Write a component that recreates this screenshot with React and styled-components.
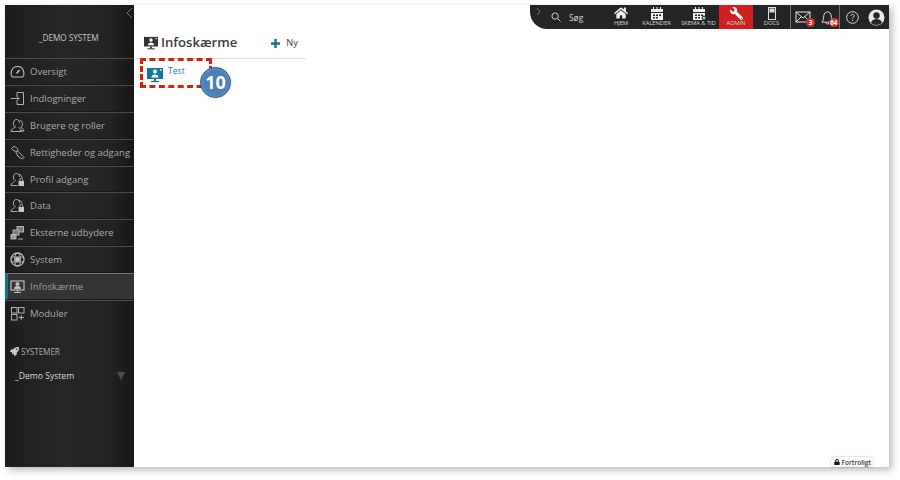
import React from "react";
import styled, { createGlobalStyle } from "styled-components";
import { FaHome, FaLock, FaRocket, FaWrench } from "react-icons/fa";

const Global = createGlobalStyle`
  html, body { margin: 0; padding: 0; background: #fff; }
  body { width: 900px; height: 480px; overflow: hidden; font-family: "Open Sans", "Liberation Sans", sans-serif; }
  * { box-sizing: border-box; }
`;

const Page = styled.div`
  width: 900px;
  height: 480px;
  padding: 5px 11px 13px 5px;
`;
const Frame = styled.div`
  position: relative;
  display: flex;
  width: 884px;
  height: 462px;
  background: #fff;
  box-shadow: 3px 3px 7px rgba(0, 0, 0, 0.28);
`;
const Sidebar = styled.aside`
  width: 129px;
  flex: none;
  position: relative;
  display: flex;
  flex-direction: column;
  color: #aaa;
  background: linear-gradient(90deg, #1c1d1e 0%, #262626 45%, #232323 80%, #171717 100%);
`;
const Collapse = styled.svg`
  position: absolute;
  top: 2px;
  right: 1px;
  width: 7px;
  height: 12px;
`;
const Brand = styled.div`
  height: 53px;
  padding: 27px 0 0 34px;
  font-size: 8.3px;
  line-height: 12px;
  color: #c4c4c4;
  letter-spacing: -0.1px;
`;
const Menu = styled.nav`
  display: flex;
  flex-direction: column;
`;
const MenuRow = styled.div`
  height: 26.9px;
  display: flex;
  align-items: center;
  gap: 5px;
  border-top: 1px solid ${(p) => (p.$active ? "#77797a" : "#4b4b4b")};
  border-bottom: 1px solid #181818;
  border-left: ${(p) => (p.$active ? "3px solid #14708f" : "0 solid transparent")};
  padding-left: ${(p) => (p.$active ? "2px" : "5px")};
  background: ${(p) => (p.$active ? "#333435" : "transparent")};
  font-size: 9.5px;
  white-space: nowrap;
  color: ${(p) => (p.$active ? "#9c9c9c" : "#aaa")};
  &:last-child { border-bottom: 0; }
`;
const MenuIcon = styled.svg`
  width: 15px;
  height: 15px;
  flex: none;
  fill: none;
  stroke: #bdbdbd;
  stroke-width: 0.9;
`;
const SectionTitle = styled.div`
  margin-top: 19px;
  padding-left: 5px;
  display: flex;
  align-items: center;
  gap: 2px;
  font-size: 8.2px;
  line-height: 12px;
  letter-spacing: -0.1px;
  color: #aaa;
`;
const SystemRow = styled.div`
  margin-top: 12px;
  padding: 0 9px 0 10px;
  display: flex;
  justify-content: space-between;
  align-items: center;
  font-size: 8.6px;
  line-height: 12px;
  color: #d8d8d8;
`;
const Caret = styled.span`
  width: 0;
  height: 0;
  border-left: 4px solid transparent;
  border-right: 4px solid transparent;
  border-top: 8px solid #4c4c4c;
`;
const Main = styled.main`
  flex: 1;
  min-width: 0;
  display: flex;
  flex-direction: column;
`;
const TopBar = styled.header`
  align-self: flex-end;
  width: 359px;
  height: 24px;
  display: flex;
  align-items: stretch;
  background: #232426;
  border-radius: 0 0 0 17px;
  color: #d8d8d8;
`;
const Expand = styled.svg`
  width: 5px;
  height: 9px;
  margin: 2px 0 0 6px;
  flex: none;
`;
const Search = styled.div`
  display: flex;
  align-items: center;
  gap: 8px;
  width: 56px;
  flex: none;
  margin-left: 10px;
  font-size: 8.4px;
  svg { width: 10px; height: 10px; fill: none; stroke: #d0d0d0; stroke-width: 1.1; }
`;
const Nav = styled.div`
  display: flex;
  align-items: stretch;
  flex: none;
`;
const NavItem = styled.div`
  width: ${(p) => p.$w}px;
  display: flex;
  flex-direction: column;
  align-items: center;
  justify-content: flex-end;
  padding-bottom: 2px;
  font-size: 5.9px;
  line-height: 7px;
  white-space: nowrap;
  letter-spacing: -0.1px;
  color: #d4d4d4;
  background: ${(p) => (p.$active ? "#cf1f20" : "transparent")};
`;
const NavGlyph = styled.svg`
  width: 14px;
  height: 13px;
  fill: #f1f1f1;
`;
const AdminGlyph = styled(FaWrench)`
  width: 13px;
  height: 13px;
  color: #f4f4f4;
  transform: scaleX(-1);
`;
const Divider = styled.div`
  width: 1px;
  background: #707172;
  flex: none;
`;
const Tool = styled.div`
  width: ${(p) => p.$w}px;
  position: relative;
  flex: none;
  display: flex;
  align-items: center;
  justify-content: center;
`;
const ToolIcon = styled.svg`
  width: ${(p) => p.$s || 16}px;
  height: ${(p) => p.$s || 16}px;
  fill: none;
  stroke: #e4e4e4;
  stroke-width: 1;
`;
const Count = styled.span`
  position: absolute;
  right: ${(p) => p.$r}px;
  bottom: 2px;
  min-width: 9px;
  height: 9px;
  padding: 0 1.5px;
  border-radius: 4.5px;
  background: #d92b2b;
  color: #fff;
  font-size: 6.4px;
  font-weight: 700;
  line-height: 9px;
  text-align: center;
`;
const ListPanel = styled.section`
  width: 171px;
  margin-left: 1px;
`;
const PanelHead = styled.div`
  height: 30px;
  padding: 6px 8px 0 9px;
  display: flex;
  align-items: flex-start;
  justify-content: space-between;
  border-bottom: 1px solid #dcdcdc;
`;
const Title = styled.h1`
  margin: 0;
  display: flex;
  align-items: center;
  gap: 3px;
  font-size: 13.1px;
  line-height: 15px;
  font-weight: 600;
  color: #3a3a3a;
`;
const NewButton = styled.div`
  display: flex;
  align-items: center;
  gap: 5px;
  padding-top: 2px;
  font-size: 9.3px;
  line-height: 12px;
  color: #3c3c3c;
`;
const ListItem = styled.div`
  display: flex;
  align-items: flex-start;
  gap: 5px;
  padding: 6px 0 0 12px;
  font-size: 8.6px;
  line-height: 12px;
  color: #1a7d9f;
  svg { margin-top: 2px; }
`;
const Callout = styled.div`
  position: absolute;
  left: 135px;
  top: 53px;
  width: 72px;
  height: 30px;
  border: 3px dashed #d8200e;
`;
const Badge = styled.div`
  position: absolute;
  left: 195px;
  top: 62px;
  width: 31px;
  height: 31px;
  border-radius: 50%;
  background: #4a80b7;
  border: 1.5px solid #2f6295;
  box-shadow: inset 0 0 3px rgba(255,255,255,.35), 0 0 2px rgba(0,0,0,.2);
  color: #fff;
  font-size: 18px;
  line-height: 28px;
  font-weight: 700;
  text-align: center;
`;
const Confidential = styled.div`
  position: absolute;
  right: 16px;
  bottom: 0;
  height: 10px;
  padding: 0 2px 0 3px;
  display: flex;
  align-items: center;
  gap: 2px;
  border-radius: 4px 4px 0 0;
  background: #fff;
  box-shadow: 0 0 2px rgba(0, 0, 0, 0.35);
  color: #333;
  font-size: 6.5px;
  font-weight: 600;
  svg { width: 6px; height: 6px; }
`;

const TwoPeople = () => (<>
  <path d="M6 9C4.200 9 3.400 7 3.400 5.200S4.500 1.500 6.500 1.500c1.700 0 3 1.500 3 3.700" />
  <path d="M9.500 2.500c2 0 3 1.300 3 3.200s-.8 3-1.800 3.600c1 .6 2.800 1 3.300 3.700H9.500" />
  <path d="M1 13.500c.3-2.600 2.300-3.300 3.700-4M8.300 9.500c1.400.7 3 1.400 3.200 4M1 13.500h10.500" />
</>);
const PeopleLock = () => (<>
  <path d="M5.800 8.500C4.200 8.500 3.400 6.800 3.400 5S4.500 1.500 6.500 1.500 9.600 3 9.600 5" />
  <path d="M9 2.500c1.800.2 3 1.400 3 3.200" />
  <path d="M1 13.500c.3-2.500 2.200-3.100 3.600-3.800M1 13.500h6.500" />
  <rect x="8.500" y="9" width="5.500" height="5" fill="#c6c6c6" stroke="none" />
  <path d="M9.800 9V7.800a1.450 1.450 0 0 1 2.900 0V9" />
</>);

const icons = {
  gauge: <><path d="M2.500 13C.5 12 1 9 1.500 7 2.300 4 4.500 2.500 7.500 2.500S12.700 4 13.500 7c.5 2 1 5-1 6z" strokeWidth="1.100" /><path d="M6.500 9.500L9.500 6" strokeWidth="1.600" /></>,
  login: <><path d="M7 1.500h6.500v12H7M7 1.500v3.500M7 13.500V10" /><path d="M1 7.500h8M6.500 5l2.500 2.500L6.500 10" /></>,
  users: <TwoPeople />,
  key: <><path d="M1.500 3.500L4 1.500c1.500 0 3.500 1.500 4 3.500L7 6.500C5 6.500 2.500 5.500 1.500 3.500z" /><path d="M7.500 5.800l6.500 6.700-1.500 1.500-1.500-1-1 0-1-1.500-1 0L5.800 7" /></>,
  profile: <PeopleLock />,
  network: <><rect x="7" y="1.500" width="6.500" height="5.500" fill="#777" /><rect x="3" y="5" width="6" height="5" fill="#777" /><rect x="1" y="9.500" width="5" height="4.500" fill="#999" /><path d="M8 14h5" /></>,
  globe: <><circle cx="7.500" cy="7.500" r="6.500" strokeWidth="1.300" /><ellipse cx="7.500" cy="7.500" rx="3" ry="6.500" /><path d="M1.500 5h12M1.500 10h12" /><circle cx="7.500" cy="7.500" r="2.200" fill="#c6c6c6" /></>,
  screen: <><rect x="1" y="2" width="13" height="9" strokeWidth="1.200" /><circle cx="7.500" cy="5" r="1.600" fill="#c6c6c6" /><path d="M4.500 9.500c0-1.500 1.200-2.200 3-2.200s3 .7 3 2.200z" fill="#c6c6c6" /><path d="M7.500 11v2M4 13.500h7" strokeWidth="1.200" /></>,
  modules: <><rect x="1.500" y="1.500" width="5.500" height="5.500" /><rect x="8.500" y="1.500" width="5.500" height="5.500" /><rect x="1.500" y="8.500" width="5.500" height="5.500" /><path d="M11.250 9v5M8.500 11.500h5.500" /></>,
};

const rows = [
  ["gauge", "Oversigt"],
  ["login", "Indlogninger"],
  ["users", "Brugere og roller"],
  ["key", "Rettigheder og adgang"],
  ["profile", "Profil adgang"],
  ["profile", "Data"],
  ["network", "Eksterne udbydere"],
  ["globe", "System"],
  ["screen", "Infoskærme", true],
  ["modules", "Moduler"],
];

const Monitor = ({ color, size = 16 }) => (
  <svg width={size} height={size} viewBox="0 0 16 16">
    <rect x="0" y="1" width="16" height="11" fill={color} />
    <circle cx="8" cy="4.600" r="2" fill="#fff" />
    <path d="M4.500 10.500c0-2 1.500-3 3.500-3s3.500 1 3.500 3z" fill="#fff" />
    <rect x="13" y="2.200" width="1.500" height="1.500" fill="#fff" />
    <rect x="7" y="12" width="2" height="2" fill={color} />
    <rect x="4" y="14" width="8" height="1.200" fill={color} />
  </svg>
);

const Calendar = ({ dot }) => (
  <NavGlyph viewBox="0 0 14 13">
    <rect x="1" y="2" width="12" height="3" />
    <path d="M3 0h1v2H3zM6.500 0h1v2h-1zM10 0h1v2h-1z" />
    <path d="M1 6h12v7H1zM3 7.500v1.500h2V7.500zM6 7.500v1.500h2V7.500zM9 7.500v1.500h2V7.500zM3 10v1.500h2V10zM6 10v1.500h2V10z" fillRule="evenodd" />
    {dot && <circle cx="12" cy="11" r="2" fill="#bbb" stroke="#232426" />}
  </NavGlyph>
);

export default function App() {
  return (
    <Page>
      <Global />
      <Frame>
        <Sidebar>
          <Collapse viewBox="0 0 7 12"><path d="M6 1L1 6l5 5" fill="none" stroke="#6f6f6f" /></Collapse>
          <Brand>_DEMO SYSTEM</Brand>
          <Menu>
            {rows.map(([icon, label, active]) => (
              <MenuRow key={label} $active={active}>
                <MenuIcon viewBox="0 0 15 15">{icons[icon]}</MenuIcon>
                {label}
              </MenuRow>
            ))}
          </Menu>
          <SectionTitle><FaRocket size={9} color="#c8c8c8" />SYSTEMER</SectionTitle>
          <SystemRow>_Demo System<Caret /></SystemRow>
        </Sidebar>
        <Main>
          <TopBar>
            <Expand viewBox="0 0 5 9"><path d="M1 1l3 3.500-3 3.500" fill="none" stroke="#777" /></Expand>
            <Search>
              <svg viewBox="0 0 11 11"><circle cx="4.500" cy="4.500" r="3.500" /><path d="M7 7l3.500 3.500" /></svg>
              Søg
            </Search>
            <Nav>
              <NavItem $w={28}>
                <FaHome size={14} color="#f1f1f1" />
                HJEM
              </NavItem>
              <NavItem $w={43}><Calendar />KALENDER</NavItem>
              <NavItem $w={41}><Calendar dot />SKEMA &amp; TID</NavItem>
              <NavItem $w={34} $active>
                <AdminGlyph />
                ADMIN
              </NavItem>
              <NavItem $w={37}>
                <NavGlyph viewBox="0 0 14 13" style={{ fill: "none", stroke: "#ddd" }}>
                  <rect x="3.500" y="0.500" width="7" height="12" />
                  <rect x="5" y="2" width="4" height="3" fill="#ddd" />
                </NavGlyph>
                DOCS
              </NavItem>
            </Nav>
            <Divider />
            <Tool $w={24}>
              <ToolIcon viewBox="0 0 16 16" $s={16}><rect x="1" y="3" width="14" height="10" /><path d="M1 3l7 6 7-6M1 13l5.500-5.500M15 13L9.500 7.500" /></ToolIcon>
              <Count $r={0}>3</Count>
            </Tool>
            <Tool $w={24}>
              <ToolIcon viewBox="0 0 16 16" $s={15}><path d="M2 13c2-2 1.500-4 2-7 .4-2.500 2-4 4-4s3.600 1.500 4 4c.5 3 0 5 2 7zM6.500 13.500a1.500 1.500 0 0 0 3 0" /></ToolIcon>
              <Count $r={0}>64</Count>
            </Tool>
            <Divider />
            <Tool $w={24}>
              <ToolIcon viewBox="0 0 14 14" $s={13}>
                <circle cx="7" cy="7" r="6.300" />
                <path d="M5.200 5.400c0-1.100.8-1.800 1.900-1.800s1.800.7 1.800 1.600c0 1.400-1.900 1.500-1.900 3M7 9.500v1.300" />
              </ToolIcon>
            </Tool>
            <Tool $w={25}>
              <svg width="17" height="17" viewBox="0 0 17 17">
                <circle cx="8.500" cy="8.500" r="8" fill="#e8e8e8" />
                <circle cx="8.500" cy="6.500" r="3.200" fill="#232426" />
                <path d="M3 14c.5-3 3-4 5.500-4s5 1 5.500 4c-3 2.500-8 2.500-11 0z" fill="#232426" />
              </svg>
            </Tool>
          </TopBar>
          <ListPanel>
            <PanelHead>
              <Title><Monitor color="#333" size={14} />Infoskærme</Title>
              <NewButton>
                <svg width="11" height="11" viewBox="0 0 11 11"><path d="M5.500 1v9M1 5.500h9" stroke="#176f90" strokeWidth="2.400" /></svg>
                Ny
              </NewButton>
            </PanelHead>
            <ListItem><Monitor color="#12789c" size={16} />Test</ListItem>
          </ListPanel>
        </Main>
        <Callout />
        <Badge>10</Badge>
        <Confidential><FaLock color="#111" />Fortroligt</Confidential>
      </Frame>
    </Page>
  );
}
